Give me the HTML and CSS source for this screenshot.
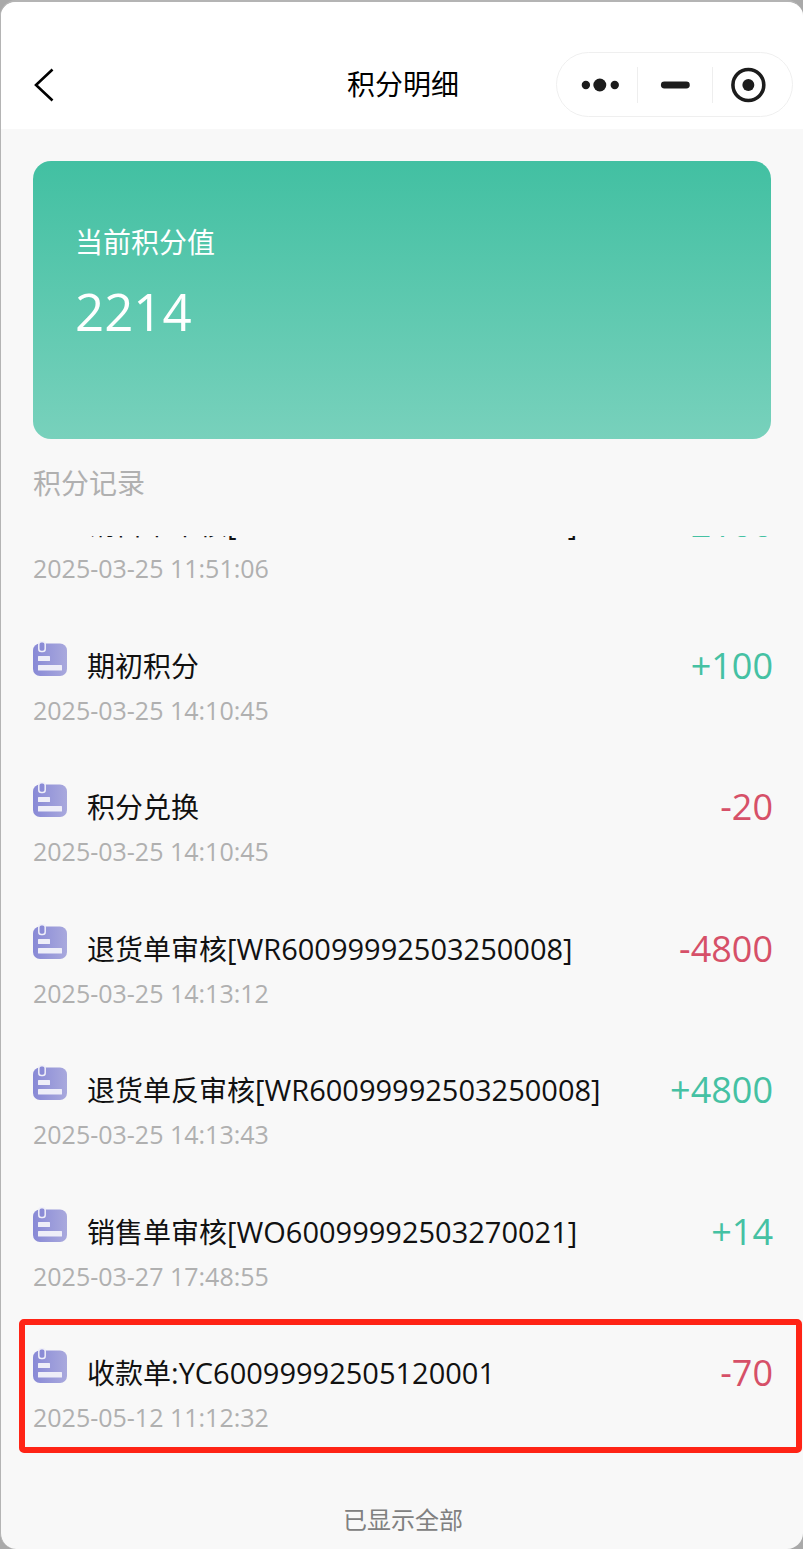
FILE: index.html
```html
<!DOCTYPE html>
<html lang="zh-CN">
<head>
    <meta charset="UTF-8">
    <title>积分明细</title>
    <link rel="stylesheet" href="styles.css">
</head>
<body>
    <svg class="sprite" width="0" height="0">
        <defs>
            <linearGradient id="iconFill" x1="0" y1="0" x2="1" y2="0">
                <stop offset="0" stop-color="#8889d6"/>
                <stop offset="1" stop-color="#a9a9dd"/>
            </linearGradient>
            <symbol id="noteIcon" viewBox="0 0 34 35">
                <rect x="0" y="2.500" width="34" height="32.500" rx="7" fill="url(#iconFill)"/>
                <rect x="5.800" y="0.800" width="6.400" height="9.600" rx="2.500" fill="#8a8bd6" stroke="#f0f0f9" stroke-width="1.500"/>
                <rect x="5" y="15" width="12" height="5" rx="0.500" fill="#eeeef8"/>
                <rect x="5" y="24" width="24" height="5.500" rx="0.500" fill="#eeeef8"/>
            </symbol>
        </defs>
    </svg>

    <div class="page">
        <div class="navbar">
            <svg class="back" width="20" height="34" viewBox="0 0 20 34">
                <path d="M18.5 1.5 L2 17 L18.5 32.5" fill="none" stroke="#000" stroke-width="2.6"/>
            </svg>
            <div class="nav-title">积分明细</div>
            <div class="capsule">
                <svg class="cap-btn" width="80" height="36" viewBox="0 0 80 36">
                    <circle cx="29" cy="18" r="4.2" fill="#1c1c1c"/>
                    <circle cx="43" cy="18" r="6.5" fill="#1c1c1c"/>
                    <circle cx="58" cy="18" r="4.2" fill="#1c1c1c"/>
                </svg>
                <div class="cap-line"></div>
                <svg class="cap-btn" width="75" height="36" viewBox="0 0 75 36">
                    <rect x="23" y="14.500" width="29" height="7" rx="3.500" fill="#1c1c1c"/>
                </svg>
                <div class="cap-line"></div>
                <svg class="cap-btn" width="79" height="36" viewBox="0 0 79 36">
                    <circle cx="35.500" cy="18" r="15.500" fill="none" stroke="#1c1c1c" stroke-width="3.600"/>
                    <circle cx="35.500" cy="18" r="6" fill="#1c1c1c"/>
                </svg>
            </div>
        </div>

        <div class="content">
            <div class="score-card">
                <div class="score-label">当前积分值</div>
                <div class="score-value">2214</div>
            </div>
            <div class="section-title">积分记录</div>

            <div class="record-list">
                <div class="record record-first">
                    <div class="record-top">
                        <svg class="record-icon"><use href="#noteIcon"/></svg>
                        <div class="record-name">销售单审核<span class="record-code">[WO60099992503250001]</span></div>
                        <div class="record-num plus">+2100</div>
                    </div>
                    <div class="record-time">2025-03-25 11:51:06</div>
                </div>
                <div class="record">
                    <div class="record-top">
                        <svg class="record-icon"><use href="#noteIcon"/></svg>
                        <div class="record-name">期初积分</div>
                        <div class="record-num plus">+100</div>
                    </div>
                    <div class="record-time">2025-03-25 14:10:45</div>
                </div>
                <div class="record">
                    <div class="record-top">
                        <svg class="record-icon"><use href="#noteIcon"/></svg>
                        <div class="record-name">积分兑换</div>
                        <div class="record-num minus">-20</div>
                    </div>
                    <div class="record-time">2025-03-25 14:10:45</div>
                </div>
                <div class="record">
                    <div class="record-top">
                        <svg class="record-icon"><use href="#noteIcon"/></svg>
                        <div class="record-name">退货单审核<span class="record-code">[WR60099992503250008]</span></div>
                        <div class="record-num minus">-4800</div>
                    </div>
                    <div class="record-time">2025-03-25 14:13:12</div>
                </div>
                <div class="record">
                    <div class="record-top">
                        <svg class="record-icon"><use href="#noteIcon"/></svg>
                        <div class="record-name">退货单反审核<span class="record-code">[WR60099992503250008]</span></div>
                        <div class="record-num plus">+4800</div>
                    </div>
                    <div class="record-time">2025-03-25 14:13:43</div>
                </div>
                <div class="record">
                    <div class="record-top">
                        <svg class="record-icon"><use href="#noteIcon"/></svg>
                        <div class="record-name">销售单审核<span class="record-code">[WO60099992503270021]</span></div>
                        <div class="record-num plus">+14</div>
                    </div>
                    <div class="record-time">2025-03-27 17:48:55</div>
                </div>
                <div class="record">
                    <div class="record-top">
                        <svg class="record-icon"><use href="#noteIcon"/></svg>
                        <div class="record-name">收款单<span class="record-code">:YC60099992505120001</span></div>
                        <div class="record-num minus">-70</div>
                    </div>
                    <div class="record-time">2025-05-12 11:12:32</div>
                </div>
                <div class="list-end">已显示全部</div>
            </div>
        </div>

        <div class="mark-box"></div>
    </div>
</body>
</html>
```

FILE: styles.css
```css
html, body {
    margin: 0;
    padding: 0;
    background-color: #a9a9a9;
}
body {
    font-family: "Open Sans", "Noto Sans CJK SC", sans-serif;
    width: 803px;
    height: 1549px;
    overflow: hidden;
}
.sprite {
    position: absolute;
}
.page {
    position: relative;
    box-sizing: border-box;
    width: 803px;
    height: 1549px;
    border-top: 2px solid #b4b4b4;
    border-left: 1px solid #b4b4b4;
    border-radius: 16px;
    overflow: hidden;
    background-color: #f8f8f8;
    display: flex;
    flex-direction: column;
}
.navbar {
    position: relative;
    flex: none;
    height: 127px;
    background-color: white;
    display: flex;
    align-items: flex-start;
}
.back {
    margin: 66px 0 0 33px;
}
.nav-title {
    position: absolute;
    left: 346px;
    top: 62px;
    font-size: 28px;
    line-height: 40px;
    color: #000;
}
.capsule {
    box-sizing: border-box;
    margin: 50px 0 0 auto;
    margin-right: 10px;
    width: 237px;
    height: 65px;
    border: 1px solid #efefef;
    border-radius: 33px;
    display: flex;
    align-items: center;
}
.cap-line {
    width: 1px;
    height: 36px;
    background-color: #eeeeee;
}
.content {
    flex: 1;
    min-height: 0;
    display: flex;
    flex-direction: column;
    padding: 32px 32px 0 32px;
}
.score-card {
    flex: none;
    box-sizing: border-box;
    height: 278px;
    padding: 61px 42px 0;
    border-radius: 18px;
    background: linear-gradient(180deg, #42c0a2, #78d1bc);
    color: white;
}
.score-label {
    font-size: 28px;
    line-height: 40px;
}
.score-value {
    margin-top: 17px;
    font-size: 51px;
    line-height: 64px;
}
.section-title {
    flex: none;
    margin-top: 24px;
    font-size: 28px;
    line-height: 40px;
    color: #b0b0b0;
}
.record-list {
    flex: 1;
    min-height: 0;
    overflow: hidden;
    margin-top: 33px;
    margin-right: -32px;
    padding-right: 30px;
}
.record {
    box-sizing: border-box;
    height: 141.500px;
    padding-top: 25px;
}
.record-first {
    margin-top: -62px;
}
.record-top {
    display: flex;
    align-items: flex-start;
    height: 49px;
}
.record-icon {
    flex: none;
    width: 34px;
    height: 35px;
}
.record-name {
    margin-left: 20px;
    margin-top: 5px;
    font-size: 28px;
    line-height: 40px;
    color: #111;
    white-space: nowrap;
}
.record-code {
    font-size: 29px;
}
.record-num {
    margin-left: auto;
    margin-top: 1px;
    font-size: 36px;
    line-height: 48px;
}
.plus {
    color: #45c1a3;
}
.minus {
    color: #d65068;
}
.record-time {
    font-size: 25px;
    line-height: 40px;
    color: #b0b0b0;
}
.list-end {
    margin-top: 35px;
    text-align: center;
    font-size: 24px;
    line-height: 40px;
    color: #808080;
}
.mark-box {
    position: absolute;
    left: 18px;
    top: 1317px;
    width: 783px;
    height: 134px;
    box-sizing: border-box;
    border: 6px solid #ff2416;
    border-radius: 5px;
}
```
